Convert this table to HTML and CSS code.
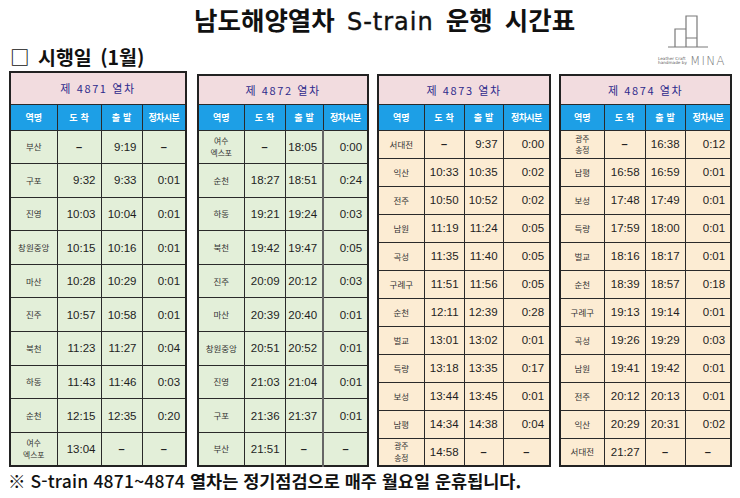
FILE: index.html
```html
<!DOCTYPE html>
<html lang="ko">
<head>
<meta charset="utf-8">
<title>남도해양열차 S-train 운행 시간표</title>
<link rel="stylesheet" href="styles.css">
</head>
<body>
<div class="page">
  <header class="head">
    <div class="head-text">
      <h1 class="title">남도해양열차 <span class="lat">S-train</span> 운행 시간표</h1>
      <h2 class="sub">□ 시행일 (1월)</h2>
    </div>
    <div class="logo">
      <svg class="logo-mark" width="50" height="36" viewBox="0 0 50 36">
        <path d="M6 34 H46 M13 34 V16 H24 M24 34 V3 H35 V34 M24 25 H35" fill="none" stroke="#7a7a7a" stroke-width="1.2"/>
      </svg>
      <div class="logo-text">
        <div class="logo-small"><span>Leather Craft</span><span>handmade by</span></div>
        <span class="logo-name">MINA</span>
      </div>
    </div>
  </header>

  <div class="tables">
    <table class="tt t1 green">
      <colgroup><col class="w47"><col class="w44"><col class="w41"><col class="w44"></colgroup>
      <tr class="cap cap1"><th colspan="4">제 4871 열차</th></tr>
      <tr class="hd"><th>역명</th><th class="sp">도착</th><th class="sp">출발</th><th class="cond">정차시분</th></tr>
      <tr class="r10"><td class="st">부산</td><td class="x">–</td><td class="n">9:19</td><td class="x">–</td></tr>
      <tr class="r10"><td class="st">구포</td><td class="n">9:32</td><td class="n">9:33</td><td class="n">0:01</td></tr>
      <tr class="r10"><td class="st">진영</td><td class="n">10:03</td><td class="n">10:04</td><td class="n">0:01</td></tr>
      <tr class="r10"><td class="st">창원중앙</td><td class="n">10:15</td><td class="n">10:16</td><td class="n">0:01</td></tr>
      <tr class="r10"><td class="st">마산</td><td class="n">10:28</td><td class="n">10:29</td><td class="n">0:01</td></tr>
      <tr class="r10"><td class="st">진주</td><td class="n">10:57</td><td class="n">10:58</td><td class="n">0:01</td></tr>
      <tr class="r10"><td class="st">북천</td><td class="n">11:23</td><td class="n">11:27</td><td class="n">0:04</td></tr>
      <tr class="r10"><td class="st">하동</td><td class="n">11:43</td><td class="n">11:46</td><td class="n">0:03</td></tr>
      <tr class="r10"><td class="st">순천</td><td class="n">12:15</td><td class="n">12:35</td><td class="n">0:20</td></tr>
      <tr class="r10"><td class="st two">여수<br>엑스포</td><td class="n">13:04</td><td class="x">–</td><td class="x">–</td></tr>
    </table>

    <table class="tt t2 green">
      <colgroup><col class="w46"><col class="w41"><col class="w38"><col class="w45"></colgroup>
      <tr class="cap"><th colspan="4">제 4872 열차</th></tr>
      <tr class="hd"><th>역명</th><th class="sp">도착</th><th class="sp">출발</th><th class="cond">정차시분</th></tr>
      <tr class="r10"><td class="st two">여수<br>엑스포</td><td class="x">–</td><td class="n">18:05</td><td class="n thick">0:00</td></tr>
      <tr class="r10"><td class="st">순천</td><td class="n">18:27</td><td class="n">18:51</td><td class="n thick">0:24</td></tr>
      <tr class="r10"><td class="st">하동</td><td class="n">19:21</td><td class="n">19:24</td><td class="n thick">0:03</td></tr>
      <tr class="r10"><td class="st">북천</td><td class="n">19:42</td><td class="n">19:47</td><td class="n thick">0:05</td></tr>
      <tr class="r10"><td class="st">진주</td><td class="n">20:09</td><td class="n">20:12</td><td class="n thick">0:03</td></tr>
      <tr class="r10"><td class="st">마산</td><td class="n">20:39</td><td class="n">20:40</td><td class="n thick">0:01</td></tr>
      <tr class="r10"><td class="st">창원중앙</td><td class="n">20:51</td><td class="n">20:52</td><td class="n thick">0:01</td></tr>
      <tr class="r10"><td class="st">진영</td><td class="n">21:03</td><td class="n">21:04</td><td class="n thick">0:01</td></tr>
      <tr class="r10"><td class="st">구포</td><td class="n">21:36</td><td class="n">21:37</td><td class="n thick">0:01</td></tr>
      <tr class="r10"><td class="st">부산</td><td class="n">21:51</td><td class="x">–</td><td class="x thick">–</td></tr>
    </table>

    <table class="tt t3 beige">
      <colgroup><col class="w46"><col class="w40"><col class="w39"><col class="w47"></colgroup>
      <tr class="cap"><th colspan="4">제 4873 열차</th></tr>
      <tr class="hd"><th>역명</th><th class="sp">도착</th><th class="sp">출발</th><th class="cond">정차시분</th></tr>
      <tr class="r12"><td class="st">서대전</td><td class="x">–</td><td class="n">9:37</td><td class="n">0:00</td></tr>
      <tr class="r12"><td class="st">익산</td><td class="n">10:33</td><td class="n">10:35</td><td class="n">0:02</td></tr>
      <tr class="r12"><td class="st">전주</td><td class="n">10:50</td><td class="n">10:52</td><td class="n">0:02</td></tr>
      <tr class="r12"><td class="st">남원</td><td class="n">11:19</td><td class="n">11:24</td><td class="n">0:05</td></tr>
      <tr class="r12"><td class="st">곡성</td><td class="n">11:35</td><td class="n">11:40</td><td class="n">0:05</td></tr>
      <tr class="r12"><td class="st">구례구</td><td class="n">11:51</td><td class="n">11:56</td><td class="n">0:05</td></tr>
      <tr class="r12"><td class="st">순천</td><td class="n">12:11</td><td class="n">12:39</td><td class="n">0:28</td></tr>
      <tr class="r12"><td class="st">벌교</td><td class="n">13:01</td><td class="n">13:02</td><td class="n">0:01</td></tr>
      <tr class="r12"><td class="st">득량</td><td class="n">13:18</td><td class="n">13:35</td><td class="n">0:17</td></tr>
      <tr class="r12"><td class="st">보성</td><td class="n">13:44</td><td class="n">13:45</td><td class="n">0:01</td></tr>
      <tr class="r12"><td class="st">남평</td><td class="n">14:34</td><td class="n">14:38</td><td class="n">0:04</td></tr>
      <tr class="r12"><td class="st two">광주<br>송정</td><td class="n">14:58</td><td class="x">–</td><td class="x">–</td></tr>
    </table>

    <table class="tt t4 beige">
      <colgroup><col class="w44"><col class="w41"><col class="w40"><col class="w46"></colgroup>
      <tr class="cap"><th colspan="4">제 4874 열차</th></tr>
      <tr class="hd"><th>역명</th><th class="sp">도착</th><th class="sp">출발</th><th class="cond">정차시분</th></tr>
      <tr class="r12"><td class="st two">광주<br>송정</td><td class="x">–</td><td class="n">16:38</td><td class="n">0:12</td></tr>
      <tr class="r12"><td class="st">남평</td><td class="n">16:58</td><td class="n">16:59</td><td class="n">0:01</td></tr>
      <tr class="r12"><td class="st">보성</td><td class="n">17:48</td><td class="n">17:49</td><td class="n">0:01</td></tr>
      <tr class="r12"><td class="st">득량</td><td class="n">17:59</td><td class="n">18:00</td><td class="n">0:01</td></tr>
      <tr class="r12"><td class="st">벌교</td><td class="n">18:16</td><td class="n">18:17</td><td class="n">0:01</td></tr>
      <tr class="r12"><td class="st">순천</td><td class="n">18:39</td><td class="n">18:57</td><td class="n">0:18</td></tr>
      <tr class="r12"><td class="st">구례구</td><td class="n">19:13</td><td class="n">19:14</td><td class="n">0:01</td></tr>
      <tr class="r12"><td class="st">곡성</td><td class="n">19:26</td><td class="n">19:29</td><td class="n">0:03</td></tr>
      <tr class="r12"><td class="st">남원</td><td class="n">19:41</td><td class="n">19:42</td><td class="n">0:01</td></tr>
      <tr class="r12"><td class="st">전주</td><td class="n">20:12</td><td class="n">20:13</td><td class="n">0:01</td></tr>
      <tr class="r12"><td class="st">익산</td><td class="n">20:29</td><td class="n">20:31</td><td class="n">0:02</td></tr>
      <tr class="r12"><td class="st">서대전</td><td class="n">21:27</td><td class="x">–</td><td class="x">–</td></tr>
    </table>
  </div>

  <p class="note">※ <span class="lat2">S-train 4871~4874</span> 열차는 정기점검으로 매주 월요일 운휴됩니다.</p>
</div>
</body>
</html>
```

FILE: styles.css
```css
* { box-sizing: border-box; }
html, body { margin: 0; padding: 0; background: #fff; }
body {
  width: 740px;
  height: 498px;
  overflow: hidden;
  font-family: "Noto Sans CJK KR", "Noto Sans", sans-serif;
  color: #111;
}
.page { width: 740px; height: 498px; }

.head {
  display: flex;
  height: 71px;
}
.head-text {
  flex: 1;
  padding-left: 10px;
}
.title {
  margin: 3px 0 0 184px;
  font-size: 25.5px;
  line-height: 32px;
  font-weight: 700;
  word-spacing: 5px;
  white-space: nowrap;
}
.title .lat {
  font-family: "DejaVu Sans", sans-serif;
  font-weight: 400;
  font-size: 24px;
  letter-spacing: 1px;
  word-spacing: 0;
  -webkit-text-stroke: 0.4px #111;
}
.sub {
  margin: 8px 0 0 0;
  font-size: 19.5px;
  line-height: 22px;
  font-weight: 700;
  word-spacing: 3px;
  white-space: nowrap;
}

.logo {
  width: 80px;
  margin-right: 4px;
  padding-top: 13px;
  display: flex;
  flex-direction: column;
  align-items: flex-start;
}
.logo-mark { display: block; margin-left: 6px; }
.logo-text {
  display: flex;
  align-items: flex-end;
  margin-top: 7px;
  gap: 3px;
  padding-left: 2px;
}
.logo-small {
  display: flex;
  flex-direction: column;
  font-family: "DejaVu Sans", sans-serif;
  font-size: 4.2px;
  line-height: 4px;
  color: #666;
  padding-bottom: 1px;
}
.logo-name {
  font-family: "DejaVu Sans", sans-serif;
  font-weight: 300;
  font-size: 12px;
  line-height: 10px;
  letter-spacing: 1.2px;
  color: #777;
}

.tables {
  display: flex;
  align-items: flex-start;
  padding-left: 9px;
  gap: 8px;
}
.tt {
  border-collapse: collapse;
  table-layout: fixed;
  border: 2px solid #222;
}
.t1 { width: 178px; margin-right: 2px; }
.t2 { width: 172px; margin-top: 3px; }
.t3 { width: 174px; margin-top: 3px; }
.t4 { width: 173px; margin-top: 3px; }

.w38 { width: 38px; } .w39 { width: 39px; } .w40 { width: 40px; }
.w41 { width: 41px; } .w44 { width: 44px; } .w45 { width: 45px; }
.w46 { width: 46px; } .w47 { width: 47px; } .w48 { width: 48px; }
.w49 { width: 49px; }

.tt th, .tt td {
  border: 1px solid #2a2a2a;
  padding: 0;
  overflow: hidden;
  white-space: nowrap;
}
.cap { height: 29px; }
.cap1 { height: 32px; }
.cap th {
  background: #f2dcdf;
  color: #2e2a8c;
  font-weight: 400;
  font-size: 11px;
  letter-spacing: 1.6px;
  text-align: center;
}
.hd { height: 26px; }
.hd th {
  background: #1d9fe6;
  color: #fff;
  font-weight: 700;
  font-size: 9px;
  text-align: center;
}
.hd th.sp { letter-spacing: 3px; text-indent: 3px; }
.hd th.cond { letter-spacing: -0.6px; }

.r10 { height: 33.6px; }
.r12 { height: 28px; }
.green td { background: #e3efd9; }
.beige td { background: #fcecd3; }

td.st {
  text-align: center;
  font-size: 8.5px;
  color: #333;
  line-height: 9px;
}
td.st.two { font-size: 7.8px; line-height: 11.4px; }
td.n {
  text-align: right;
  padding-right: 5px;
  font-family: "Liberation Sans", Arial, sans-serif;
  font-size: 11.5px;
  color: #1e1e1e;
}
td.x {
  text-align: center;
  font-family: "Liberation Sans", Arial, sans-serif;
  font-size: 11px;
  font-weight: 700;
  color: #222;
}
.t2 td.thick { border-left: 2px solid #666; }

.note {
  margin: 4px 0 0 8px;
  font-size: 17.5px;
  line-height: 20px;
  font-weight: 700;
  white-space: nowrap;
}
.note .lat2 { font-weight: 500; letter-spacing: 0.2px; }
```
